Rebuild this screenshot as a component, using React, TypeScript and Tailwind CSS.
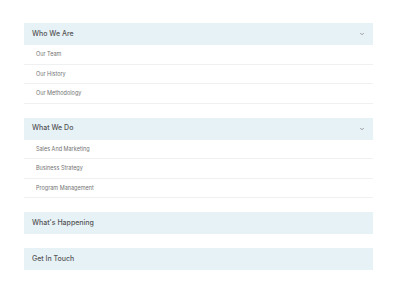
import { ChevronDown } from "lucide-react";

const sections = [
  {
    title: "Who We Are",
    items: ["Our Team", "Our History", "Our Methodology"],
  },
  {
    title: "What We Do",
    items: ["Sales And Marketing", "Business Strategy", "Program Management"],
  },
  { title: "What's Happening", items: [] },
  { title: "Get In Touch", items: [] },
];

export default function App() {
  return (
    <div className="min-h-screen bg-white pt-[23px] font-['Inter',sans-serif]">
      <div className="ml-6 flex w-[349px] flex-col gap-[14px]">
        {sections.map((s, i) => (
          <div key={i}>
            <div className="flex h-[22px] items-center justify-between bg-[#e7f2f7] pl-2 pr-2">
              <span className="text-[7px] font-medium text-[#555555]">
                {s.title}
              </span>
              {s.items.length > 0 && (
                <ChevronDown className="h-[6px] w-[6px] text-[#666666]" strokeWidth={2.5} />
              )}
            </div>
            {s.items.length > 0 && (
              <div>
                {s.items.map((item, j) => (
                  <div
                    key={j}
                    className="flex h-[19.5px] items-center border-b border-[#eef0f2] pl-3 text-[5.5px] text-[#737373]"
                  >
                    {item}
                  </div>
                ))}
              </div>
            )}
          </div>
        ))}
      </div>
    </div>
  );
}
